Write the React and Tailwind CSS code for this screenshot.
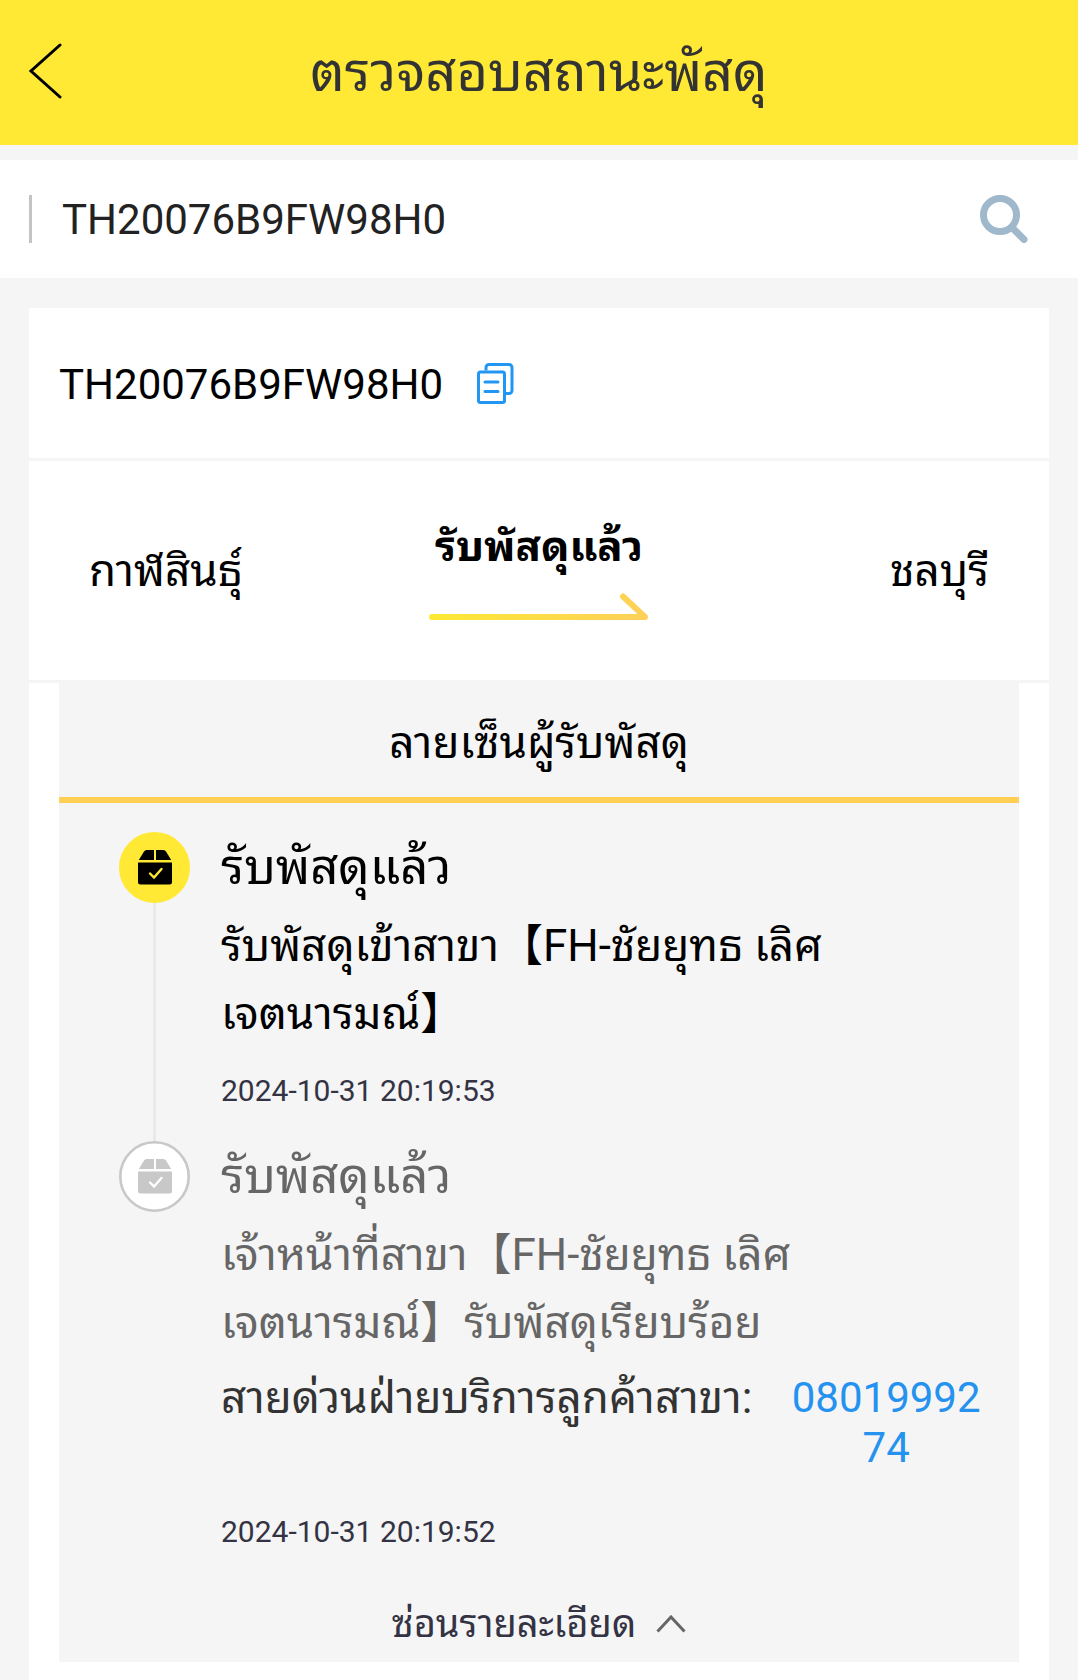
import React, { useState } from 'react';

const TRACKING_NO = 'TH20076B9FW98H0';

const events = [
    {
        id: 1,
        active: true,
        title: 'รับพัสดุแล้ว',
        detail: 'รับพัสดุเข้าสาขา【FH-ชัยยุทธ เลิศเจตนารมณ์】',
        time: '2024-10-31 20:19:53',
    },
    {
        id: 2,
        active: false,
        title: 'รับพัสดุแล้ว',
        detail: 'เจ้าหน้าที่สาขา【FH-ชัยยุทธ เลิศเจตนารมณ์】รับพัสดุเรียบร้อย',
        hotline: '0801999274',
        time: '2024-10-31 20:19:52',
    },
];

function SearchIcon() {
    return (
        <svg viewBox="0 0 48 48" className="h-12 w-12" fill="none" stroke="#9fb8cb">
            <circle cx="20" cy="20" r="16.5" strokeWidth="7" />
            <path d="M33 33.5L44 44.5" strokeWidth="7" strokeLinecap="round" />
        </svg>
    );
}

function CopyIcon() {
    return (
        <svg viewBox="0 0 37 41" className="h-[41px] w-[37px]" fill="none" stroke="#2196f3" strokeWidth="3">
            <path d="M9 7.5V4.5a3 3 0 0 1 3-3H32a3 3 0 0 1 3 3V27.5a3 3 0 0 1-3 3h-4" />
            <rect x="1.5" y="9" width="26" height="30.5" rx="2" />
            <path d="M8 19h13M8 28.5h13" strokeLinecap="round" />
        </svg>
    );
}

// Parcel badge, yellow for the latest event and grey for the older ones
function ParcelIcon({ active }) {
    const box = active ? '#000' : '#c8c8c8';
    const back = active ? '#ffe934' : '#fff';

    return (
        <svg viewBox="0 0 71 71" className="block h-[71px] w-[71px]">
            <circle cx="35.5" cy="35.5" r="34.2" fill={back} stroke={active ? back : '#c8c8c8'} strokeWidth="2.6" />
            <path d="M27.5 18H35v10H19.8L25 19.5q1-1.5 2.5-1.5zM37 18h7.5q1.5 0 2.5 1.5L52.2 28H37z" fill={box} />
            <path d="M19 30.5h34V50q0 2.5-2.5 2.5h-29Q19 52.5 19 50z" fill={box} />
            <path d="M31 41.5l4 4 7.5-8.5" fill="none" stroke={back} strokeWidth="2.4" strokeLinecap="round" />
        </svg>
    );
}

function TimelineItem({ event, isLast }) {
    return (
        <li className="flex gap-[31px]">
            <div className="flex shrink-0 flex-col items-center">
                <ParcelIcon active={event.active} />
                {!isLast && <div className="w-[3px] flex-1 bg-[#e9e9e9]" />}
            </div>
            <div className="min-w-0 flex-1 pr-[35px]">
                <h3 className={`text-[49px] leading-[72px] ${event.active ? 'text-black' : 'text-[#666]'}`}>{event.title}</h3>
                <p className={`mt-2 pr-10 text-[44px] leading-[68px] ${event.active ? 'text-black' : 'text-[#666]'}`}>
                    {event.detail}
                </p>
                {event.hotline && (
                    <div className="mt-4 mb-8 flex items-start leading-[50px]">
                        <span className="shrink-0 text-[44px] text-[#333]">สายด่วนฝ่ายบริการลูกค้าสาขา:</span>
                        <a href={`tel:${event.hotline}`} className="ml-9 flex-1 text-center text-[42px] break-all text-[#2592f0]">
                            {event.hotline}
                        </a>
                    </div>
                )}
                <time className="mt-4 mb-6 block text-[30px] leading-[53px] text-[#334]">{event.time}</time>
            </div>
        </li>
    );
}

function App() {
    const [query, setQuery] = useState(TRACKING_NO);
    const [open, setOpen] = useState(true);

    return (
        <div className="min-h-screen bg-[#f5f5f5] font-[Roboto,'Noto_Sans_Thai_Looped','Noto_Sans_CJK_SC',sans-serif] text-black">
            {/* Header */}
            <header className="grid h-[145px] grid-cols-[64px_1fr_64px] items-center bg-[#ffe934]">
                <button type="button" aria-label="ย้อนกลับ" className="pb-1 pl-7">
                    <svg viewBox="0 0 34 56" className="h-14 w-[34px]" fill="none" stroke="#000" strokeWidth="3">
                        <path d="M32 2L3 28l29 26" strokeLinecap="round" />
                    </svg>
                </button>
                <h1 className="text-center text-[54px] leading-[72px] text-[#333]">ตรวจสอบสถานะพัสดุ</h1>
            </header>

            {/* Search */}
            <form className="mt-[15px] flex h-[118px] items-center bg-white pr-[50px] pl-[29px]" onSubmit={(e) => e.preventDefault()}>
                <input
                    aria-label="หมายเลขพัสดุ"
                    value={query}
                    onChange={(e) => setQuery(e.target.value)}
                    className="h-12 min-w-0 flex-1 border-l-[3px] border-[#c4c4c4] pl-[30px] text-[42px] text-[#222] outline-none"
                />
                <button type="submit" aria-label="ค้นหา">
                    <SearchIcon />
                </button>
            </form>

            <main className="mx-[29px] mt-[30px] bg-white pb-[18px]">
                <div className="flex h-[150px] items-center gap-[34px] px-[30px]">
                    <span className="pt-1 text-[42px] leading-[50px]">{TRACKING_NO}</span>
                    <button type="button" aria-label="คัดลอก">
                        <CopyIcon />
                    </button>
                </div>

                {/* Route */}
                <div className="grid h-[225px] grid-cols-[1fr_auto_1fr] items-center border-y-[3px] border-[#f5f5f5] px-[60px] text-[44px] leading-[60px]">
                    <span>กาฬสินธุ์</span>
                    <div className="flex flex-col items-center pb-1">
                        <strong className="text-[42px] font-bold">รับพัสดุแล้ว</strong>
                        <svg viewBox="0 0 220 28" className="mt-4 h-7 w-[220px]" fill="none">
                            <defs>
                                <linearGradient id="arrow" gradientUnits="userSpaceOnUse" x1="0" y1="0" x2="220" y2="0">
                                    <stop offset="0" stopColor="#ffe934" />
                                    <stop offset="1" stopColor="#fdd05a" />
                                </linearGradient>
                            </defs>
                            <path d="M3 24h213L194 3.5" stroke="url(#arrow)" strokeWidth="6" strokeLinecap="round" strokeLinejoin="round" />
                        </svg>
                    </div>
                    <span className="text-right">ชลบุรี</span>
                </div>

                <section className="mx-[30px] bg-[#f5f5f5]">
                    <h2 className="border-b-[6px] border-[#fdd055] pt-[30px] pb-6 text-center text-[44px] leading-[60px]">
                        ลายเซ็นผู้รับพัสดุ
                    </h2>
                    {open && (
                        <ul className="pt-[29px] pl-[60px]">
                            {events.map((event, i) => (
                                <TimelineItem key={event.id} event={event} isLast={i === events.length - 1} />
                            ))}
                        </ul>
                    )}
                    <button
                        type="button"
                        onClick={() => setOpen(!open)}
                        className="flex w-full items-center justify-center gap-5 pt-4 pb-3 text-[38px] leading-[52px] text-[#334]"
                    >
                        ซ่อนรายละเอียด
                        <svg viewBox="0 0 30 18" className="h-[18px] w-[30px]" fill="none" stroke="#666" strokeWidth="3">
                            <path d="M1.5 16.5L15 2l13.5 14.5" />
                        </svg>
                    </button>
                </section>
            </main>
        </div>
    );
}

export default App;
